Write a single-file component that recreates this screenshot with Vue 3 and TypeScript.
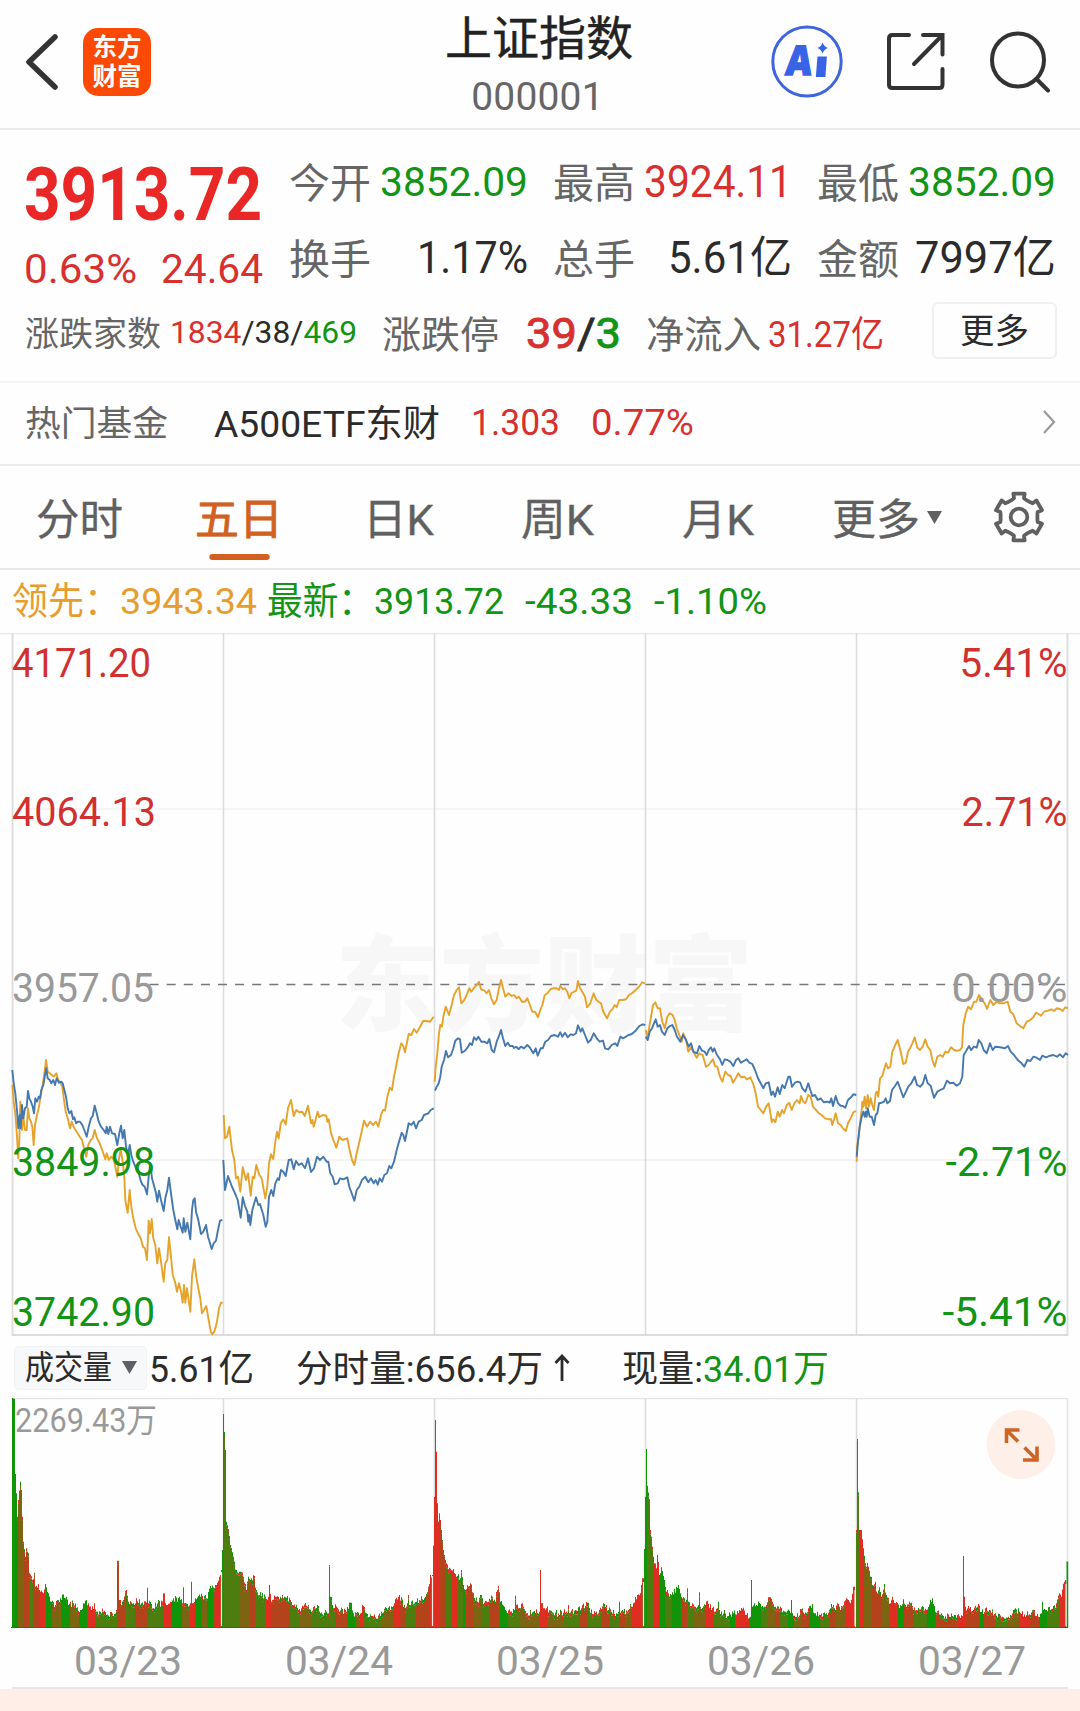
<script setup lang="ts">
import type { Directive } from 'vue'

/* Squeezes or stretches a run of text horizontally to a given advance width. */
const vFit: Directive<HTMLElement, number> = {
  mounted(el, { value }) {
    const natural = el.getBoundingClientRect().width
    el.style.transform = `scaleX(${value / natural})`
    el.style.marginRight = `${value - natural}px`
  },
}

interface Stat { label: string; value: string; tone: string; size: string; width: number }
const stats: Stat[] = [
  { label: '今开', value: '3852.09', tone: 'green', size: 'md', width: 148 },
  { label: '最高', value: '3924.11', tone: 'red', size: 'lg', width: 148 },
  { label: '最低', value: '3852.09', tone: 'green', size: 'md', width: 148 },
  { label: '换手', value: '1.17%', tone: 'ink', size: 'lg', width: 111 },
  { label: '总手', value: '5.61亿', tone: 'ink', size: 'lg', width: 124 },
  { label: '金额', value: '7997亿', tone: 'ink', size: 'lg', width: 141 },
]

interface AxisLabel { text: string; y: number; width: number; tone: string }
const priceLabels: AxisLabel[] = [
  { text: '4171.20', y: 662.5, width: 139, tone: 'up' },
  { text: '4064.13', y: 811.5, width: 144, tone: 'up' },
  { text: '3957.05', y: 987, width: 142, tone: 'flat' },
  { text: '3849.98', y: 1161.7, width: 143, tone: 'down' },
  { text: '3742.90', y: 1311.7, width: 143, tone: 'down' },
]
const percentLabels: AxisLabel[] = [
  { text: '5.41%', y: 662.5, width: 108, tone: 'up' },
  { text: '2.71%', y: 811.5, width: 106, tone: 'up' },
  { text: '0.00%', y: 987, width: 116, tone: 'flat' },
  { text: '-2.71%', y: 1161.7, width: 122, tone: 'down' },
  { text: '-5.41%', y: 1311.7, width: 125, tone: 'down' },
]
const dayLines = [223.5, 434.5, 645.5, 856.5]
const dates = ['03/23', '03/24', '03/25', '03/26', '03/27']

/* Each trading day is sampled in thirds of a pixel from its own origin. */
interface Day { ox: number; oy: number; index: string; lead: string }
const days: Day[] = [
  {
    ox: 0, oy: 1030,
    index: '37,120 41,160 46,190 51,240 55,295 59,255 62,295 66,225 70,265 75,235 80,230 84,183 88,205 93,215 98,230 102,250 106,205 111,215 116,200 120,205 124,180 130,165 135,135 139,115 143,145 149,150 154,160 160,150 165,165 170,145 177,158 184,155 188,160 193,180 198,200 203,235 208,250 214,243 219,268 223,262 228,280 233,275 240,275 247,285 253,300 260,320 266,290 273,265 278,258 284,227 290,250 296,275 303,290 311,300 317,310 320,290 325,312 330,290 336,310 345,312 352,345 358,310 363,287 368,325 373,300 378,350 384,375 389,345 394,375 400,395 408,415 415,425 423,455 428,465 434,470 441,493 447,430 451,400 456,445 463,470 468,490 472,515 477,482 483,510 491,543 496,505 502,480 507,443 513,490 520,540 526,570 532,598 536,570 542,590 548,608 551,565 556,605 562,578 571,628 576,540 580,510 584,505 588,545 595,570 603,612 610,605 618,585 624,620 630,640 635,657 641,640 648,632 654,600 660,572 667,570',
    lead: '37,165 41,215 46,250 51,320 55,385 58,330 61,215 66,300 70,260 75,300 80,300 84,235 88,265 93,275 97,290 101,345 105,285 111,255 116,235 121,205 127,170 132,140 138,90 143,125 149,130 155,135 162,140 169,130 175,150 182,160 187,170 192,210 197,245 203,265 210,295 215,275 222,293 230,305 238,318 246,330 252,355 259,380 265,345 272,330 278,325 284,300 291,325 297,335 303,350 310,370 316,388 320,370 326,390 334,380 342,390 352,440 357,385 362,360 368,395 373,440 376,510 383,548 389,480 394,530 400,565 407,595 414,610 422,625 429,650 435,655 441,690 446,572 450,610 455,567 460,625 466,645 472,700 477,655 483,695 491,755 496,700 502,690 507,622 513,680 518,735 525,755 531,785 537,760 543,785 548,818 552,765 556,818 561,775 571,845 576,740 583,688 588,735 595,775 601,805 606,850 612,840 619,828 626,870 632,905 637,913 643,905 650,880 657,835 663,818 668,818',
  },
  {
    ox: 210, oy: 960,
    index: '40,600 45,690 54,648 65,678 75,700 83,720 92,773 98,712 105,738 112,755 115,785 118,765 121,795 127,750 138,712 145,735 150,732 160,765 167,800 172,785 177,710 184,690 190,708 196,670 203,655 207,660 213,630 220,635 227,648 236,600 244,598 251,628 258,603 266,615 275,610 285,625 294,595 303,636 312,625 321,590 330,600 340,590 350,605 355,605 361,640 368,650 374,673 383,670 390,655 400,658 412,652 418,680 425,700 433,722 440,690 448,680 456,660 466,650 475,667 483,655 491,670 497,660 503,674 509,655 516,665 523,645 531,640 538,618 544,625 552,605 560,570 567,545 575,518 580,525 585,543 596,490 604,495 611,485 618,505 626,485 635,480 642,465 655,460 662,450 671,445',
    lead: '41,465 45,535 51,530 58,500 66,570 73,600 78,655 84,650 91,695 98,622 108,660 114,640 122,707 128,650 133,655 139,615 148,645 155,655 166,715 172,680 177,610 183,583 190,597 196,545 201,515 206,535 212,490 220,478 227,493 234,445 243,420 251,468 259,450 268,457 277,455 284,468 294,437 303,490 307,480 311,500 323,455 328,472 338,465 349,467 352,485 356,478 362,515 370,540 379,563 388,530 397,540 412,535 418,565 426,600 433,615 440,580 447,550 454,520 462,482 471,500 480,485 489,495 498,485 505,500 513,465 519,450 525,452 532,410 539,383 546,390 552,350 560,310 567,275 574,250 580,258 585,277 596,222 604,225 612,207 620,218 628,205 640,182 650,183 660,185 671,170',
  },
  {
    ox: 430, oy: 920,
    index: '15,512 20,500 26,490 31,470 35,440 42,420 48,393 54,412 63,405 70,385 76,362 84,355 90,358 95,398 104,393 113,382 120,370 126,375 132,352 139,360 145,350 154,365 163,365 172,370 178,357 185,390 192,397 200,365 206,350 213,330 219,355 226,378 233,368 240,378 248,378 252,384 258,380 266,387 273,380 282,385 292,375 300,383 310,400 317,385 323,407 332,385 338,385 346,365 354,360 363,348 374,345 384,350 391,337 397,350 405,338 413,352 422,343 430,345 438,340 444,316 452,335 457,325 465,345 474,368 482,360 491,340 500,355 509,365 519,362 525,385 535,388 545,375 556,370 562,378 571,350 580,355 592,347 605,342 617,332 628,318 638,313 646,315',
    lead: '14,485 17,440 22,400 27,340 31,315 36,320 40,290 47,260 57,285 65,255 72,225 80,210 87,202 94,250 103,240 110,225 118,205 124,215 132,203 140,195 147,185 153,208 163,212 170,220 177,210 184,235 192,253 200,240 207,205 213,180 219,205 226,230 235,220 245,228 252,225 260,235 267,230 276,245 285,245 292,235 300,255 307,275 315,275 324,292 331,270 337,255 344,225 352,220 362,207 370,205 380,205 387,210 391,197 398,208 405,205 412,215 418,235 424,220 432,215 439,212 444,183 450,205 457,215 465,230 471,262 481,250 491,220 498,238 505,245 513,250 520,275 531,295 540,275 549,265 554,255 560,262 568,240 578,240 588,238 597,225 606,220 617,210 627,200 637,187 645,190',
  },
  {
    ox: 640, oy: 960,
    index: '17,230 23,240 29,215 36,205 42,190 47,178 53,200 60,195 66,215 74,225 82,205 90,198 97,195 104,210 111,230 121,245 129,225 138,240 146,260 153,250 160,275 171,280 178,258 186,272 194,275 200,285 207,268 213,262 218,275 223,265 231,285 240,298 247,315 254,298 262,300 271,305 280,318 288,300 295,295 303,308 311,303 320,298 328,308 337,312 345,330 354,355 362,370 370,385 377,370 386,367 394,405 399,395 405,410 413,382 419,402 427,375 434,385 445,350 450,350 456,380 465,368 473,365 481,368 487,385 496,395 505,370 511,390 517,408 525,405 533,420 542,415 551,427 562,425 569,428 574,415 579,438 587,408 594,430 602,437 609,438 616,443 624,420 633,412 640,403 649,405',
    lead: '17,210 23,235 28,200 34,165 39,135 46,127 53,145 60,145 67,185 74,205 82,170 89,160 98,165 104,180 110,205 118,225 125,245 130,220 138,240 145,275 153,262 160,275 170,293 178,280 188,285 198,320 206,315 213,305 219,298 225,318 232,320 240,350 247,365 256,335 264,345 272,348 279,368 287,355 295,340 303,352 313,350 320,358 331,352 339,370 347,400 354,440 362,450 370,460 378,440 386,430 392,465 395,487 400,478 406,487 413,455 419,470 426,450 432,460 440,435 448,428 455,450 463,430 471,420 479,430 483,408 490,425 496,430 505,405 512,410 519,440 528,450 537,460 545,465 555,475 565,478 573,478 577,495 587,460 594,490 602,495 609,505 617,513 624,490 632,475 640,457 648,453',
  },
  {
    ox: 840, oy: 960,
    index: '50,590 54,545 59,500 65,470 70,455 74,470 77,455 80,470 83,445 89,470 95,470 102,495 107,465 112,460 117,430 125,428 132,425 137,415 142,430 150,423 156,390 165,378 173,365 182,390 190,412 198,395 205,380 214,370 224,350 231,375 241,380 249,370 256,345 263,370 272,377 282,413 292,395 301,390 311,385 321,362 330,370 340,368 350,377 360,370 367,350 371,285 379,272 387,258 393,270 402,260 410,263 416,240 424,250 431,270 440,280 450,250 458,270 466,260 480,262 495,265 504,258 512,275 522,285 533,300 543,308 553,320 562,300 571,303 580,290 590,293 600,300 607,287 618,292 630,287 640,285 651,290 660,283 669,292 677,280 684,285',
    lead: '50,605 51,560 56,530 60,490 65,450 67,425 70,440 74,410 78,445 83,405 87,440 92,415 97,435 102,450 107,400 111,395 115,410 120,355 127,348 132,330 138,310 144,325 151,320 157,275 166,255 173,240 181,270 190,312 197,308 204,275 210,265 217,250 224,232 232,262 240,270 248,260 256,238 263,260 271,270 277,300 284,320 292,290 300,285 308,290 316,275 324,278 333,262 342,270 352,272 360,270 366,262 370,195 377,160 385,140 393,148 402,125 409,125 417,105 426,120 434,130 441,147 451,120 460,135 470,125 478,130 490,130 503,125 511,155 520,163 530,190 540,198 550,205 560,185 571,180 580,172 588,158 596,162 603,167 612,155 624,152 634,148 642,153 650,145 660,147 668,153 676,142 684,145',
  },
]

const parse = (s: string): number[][] => s.split(' ').map((p) => p.split(',').map(Number))
const polyline = (s: string, ox: number, oy: number): string =>
  parse(s).map(([x, y]) => `${(ox + x / 3).toFixed(1)},${(oy + y / 3).toFixed(1)}`).join(' ')

/* Volume: envelope of the minute bars, and the colour runs (g/l/o/b/r, green to red). */
interface VolumeDay { ox: number; top: string; runs: string }
const volumeDays: VolumeDay[] = [
  {
    ox: 0,
    top: '36,204 42,206 43,250 45,432 48,490 52,560 56,510 60,455 64,480 67,560 70,635 76,680 78,655 84,670 88,730 98,750 102,728 106,770 115,762 122,785 130,790 136,762 144,790 155,815 165,825 180,805 198,800 205,825 220,820 240,840 255,812 264,820 275,840 283,820 290,845 310,845 340,858 350,840 353,692 355,692 357,810 365,825 380,780 386,815 400,820 410,805 425,820 441,810 443,773 446,820 460,835 475,810 480,830 493,790 497,820 520,805 540,810 548,820 551,772 554,820 572,820 575,755 578,820 602,800 620,805 632,768 645,765 658,740 663,720',
    runs: '52g 70o 86b 100l 118b 137r 156g 182o 210g 235o 260g 284r 350l 374b 405l 442b 490l 512r 545g 568o 584r 605g 620o 638g 646b 663r',
  },
  {
    ox: 0,
    top: '667,660 671,252 675,360 679,575 685,597 692,645 700,680 708,720 716,730 722,725 730,740 738,780 746,740 755,745 762,738 768,780 778,795 795,800 806,800 809,765 813,815 828,800 840,800 850,805 870,810 885,830 905,835 926,825 935,845 953,825 960,850 980,845 986,850 988,705 991,800 998,825 1015,838 1040,845 1052,818 1060,850 1078,855 1089,827 1100,850 1125,862 1140,858 1155,832 1172,840 1185,808 1203,802 1210,830 1221,820 1224,795 1228,825 1250,815 1275,800 1285,770 1292,735 1297,735',
    runs: '672g 720l 748o 768b 796l 812r 835b 870b 900l 935o 1005l 1040b 1065g 1078o 1092r 1145l 1178o 1200r 1216b 1248l 1285b 1297r',
  },
  {
    ox: 420,
    top: '39,647 43,500 46,270 49,365 52,520 56,575 59,550 64,600 70,660 78,700 85,718 100,718 110,740 120,745 125,720 130,765 137,780 151,760 160,790 172,815 184,795 192,818 205,815 217,800 225,815 235,767 242,815 255,840 270,845 282,840 285,797 288,825 310,830 320,850 340,845 359,845 361,720 364,820 380,835 400,850 430,848 442,848 445,825 448,850 475,832 485,835 503,818 512,848 535,850 553,822 565,840 590,850 596,845 598,815 601,848 625,840 640,820 652,795 660,790 666,745 669,745',
    runs: '56r 76b 92l 111r 128l 135g 158b 184o 208l 240b 262g 300l 355o 380r 430o 475l 502b 545l 570b 595l 615b 635o 662r 669b',
  },
  {
    ox: 420,
    top: '673,657 676,500 679,357 683,467 687,508 692,600 697,650 702,700 708,715 712,675 718,735 724,712 732,750 740,785 755,795 774,765 785,800 795,815 801,815 803,775 806,815 825,830 836,825 838,787 841,830 862,812 875,840 893,835 895,815 898,840 925,858 940,850 955,850 968,838 980,855 992,860 995,750 998,830 1010,825 1020,822 1035,830 1050,802 1056,815 1065,830 1080,830 1095,845 1111,848 1113,810 1116,850 1135,860 1145,838 1160,850 1176,822 1182,850 1200,855 1220,850 1235,822 1245,840 1256,822 1262,840 1280,805 1290,820 1300,770 1303,770',
    runs: '680g 697l 717r 735g 755l 782g 800b 820l 858o 882r 930l 945g 985r 1022g 1042l 1064o 1080b 1102l 1120g 1145o 1165b 1200g 1230l 1246b 1275o 1303r',
  },
  {
    ox: 740,
    top: '348,710 350,600 352,327 356,487 359,600 364,600 370,655 376,700 384,710 392,740 398,765 405,755 412,790 418,772 425,800 432,762 440,795 450,820 457,800 465,820 480,825 490,808 500,830 512,820 520,840 545,832 560,840 578,805 585,845 610,858 640,860 666,858 669,678 672,800 676,830 700,840 716,822 724,845 748,840 765,850 790,862 810,855 827,835 840,850 870,855 883,840 890,858 903,850 906,815 909,840 930,840 950,820 958,790 965,800 972,755 976,750',
    runs: '355l 370r 395o 422b 450o 472r 492g 522b 560l 588g 650b 678r 718b 732g 765b 800l 835o 870r 895b 920g 960l 976r',
  },
]

const colors: Record<string, string> = { g: '#119407', l: '#4d7d0e', o: '#7d6413', b: '#b2431b', r: '#de2e22' }
const paths: Record<string, string> = { g: '', l: '', o: '', b: '', r: '' }
const BASE = 1628
let seed = 7
const noise = (): number => {
  seed = (seed * 16807) % 2147483647
  return seed / 2147483647
}
for (const day of volumeDays) {
  const pts = parse(day.top)
  const runs = day.runs.split(' ').map((r) => ({ end: parseInt(r, 10), key: r.slice(-1) }))
  const last = pts[pts.length - 1][0]
  for (let px = Math.floor(pts[0][0] / 3); px * 3 <= last; px++) {
    const x = Math.max(px * 3 + 1, pts[0][0])
    const near = pts.filter((p) => Math.floor(p[0] / 3) === px)
    let y: number
    if (near.length) {
      y = Math.min(...near.map((p) => p[1]))
    } else {
      const i = Math.max(1, pts.findIndex((p) => p[0] >= x))
      const [x0, y0] = pts[i - 1]
      const [x1, y1] = pts[i]
      y = y0 + ((y1 - y0) * (x - x0)) / (x1 - x0)
      if (y > 700) y = Math.min(866, y + (noise() - 0.5) * 20)
    }
    const run = runs.find((r) => x <= r.end) ?? runs[runs.length - 1]
    const left = day.ox + px
    const top = 1330 + y / 3
    const tip = noise() > 0.5 ? 'g' : 'r'
    const mixed = run.key !== 'g' && run.key !== 'r'
    const body = Math.min(BASE, top + (mixed ? 1.5 + noise() * 3 : 0))
    if (body > top) paths[tip] += `M${left} ${top.toFixed(1)}h1V${body.toFixed(1)}h-1z`
    paths[run.key] += `M${left} ${body.toFixed(1)}h1V${BASE}h-1z`
  }
}
paths.g += `M1066.5 1561.5h1.7V${BASE}h-1.7z`
const bars = Object.keys(paths).map((k) => ({ key: k, d: paths[k], fill: colors[k] }))

/* Six-toothed gear outline around (26, 26). */
const gear = Array.from({ length: 6 }, (_, i) => {
  const a = -90 + i * 60
  return [[-22, 18.6], [-15, 19.4], [-13.5, 24], [13.5, 24], [15, 19.4], [22, 18.6]]
    .map(([d, r]) => {
      const t = ((a + d) * Math.PI) / 180
      return `${(26 + r * Math.cos(t)).toFixed(1)},${(26 + r * Math.sin(t)).toFixed(1)}`
    })
    .join(' ')
}).join(' ')
</script>

<template>
  <main class="page">
    <header class="top">
      <svg class="back" width="34" height="56" viewBox="0 0 34 56"><path d="M30 3 4 28 30 53" /></svg>
      <div class="logo"><span>东方</span><span>财富</span></div>
      <div class="heading">
        <h1>上证指数</h1>
        <p>000001</p>
      </div>
      <svg class="ai" width="72" height="74" viewBox="0 0 72 74">
        <ellipse cx="36" cy="36.5" rx="34.2" ry="34.6" />
        <text x="19" y="50" textLength="26" lengthAdjust="spacingAndGlyphs" transform="skewX(-6)">A</text>
        <path d="M46.5 31.500h9.400l-1.500 20.500h-9.600z" />
        <path d="M51.6 17.500q1.300 4 5 5.400-3.700 1.500-5 5.600-1.300-4.100-5-5.600 3.700-1.300 5-5.400z" />
      </svg>
      <svg class="share" width="60" height="60" viewBox="0 0 60 60">
        <path d="M23 3H6.500Q3 3 3 6.500V52.500Q3 56 6.500 56H53Q56.500 56 56.500 52.500V37M37 3H56.500V22.500M56 3.500 28 32" />
      </svg>
      <svg class="search" width="62" height="62" viewBox="0 0 62 62">
        <ellipse cx="29" cy="29" rx="26" ry="26.500" /><path d="m47.500 48 11.500 11.500" />
      </svg>
    </header>

    <section class="quote">
      <div class="upper">
        <div class="last">
          <div class="price"><b v-fit="238">3913.72</b></div>
          <div class="change"><span v-fit="113">0.63%</span><span v-fit="102">24.64</span></div>
        </div>
        <dl class="stats">
          <div v-for="s in stats" :key="s.label" class="stat">
            <dt v-fit="82">{{ s.label }}</dt>
            <dd v-fit="s.width" :class="[s.tone, s.size]">{{ s.value }}</dd>
          </div>
        </dl>
      </div>
      <div class="breadth">
        <span v-fit="136" class="label sm">涨跌家数</span>
        <span v-fit="187" class="count"><i class="red">1834</i>/38/<i class="green">469</i></span>
        <span v-fit="117" class="label limit">涨跌停</span>
        <span v-fit="95" class="limits"><i class="red">39</i>/<i class="green">3</i></span>
        <span v-fit="115" class="label flow">净流入</span>
        <span v-fit="116" class="inflow red">31.27亿</span>
        <button class="more">更多</button>
      </div>
    </section>

    <section class="fund">
      <span v-fit="143" class="label">热门基金</span>
      <span v-fit="226" class="name">A500ETF东财</span>
      <span v-fit="89" class="red value">1.303</span>
      <span v-fit="103" class="red rate">0.77%</span>
      <svg width="14" height="26" viewBox="0 0 14 26"><path d="m2 2 10 11L2 24" /></svg>
    </section>

    <nav class="tabs">
      <a v-fit="87">分时</a>
      <a v-fit="88" class="active">五日</a>
      <a v-fit="71">日K</a>
      <a v-fit="73">周K</a>
      <a v-fit="72">月K</a>
      <a v-fit="88">更多</a>
      <svg class="caret" width="16" height="13" viewBox="0 0 16 13"><path d="M0 0h15L7.500 13z" /></svg>
      <svg class="gear" width="52" height="52" viewBox="0 0 52 52">
        <polygon :points="gear" /><circle cx="26" cy="26" r="8.300" />
      </svg>
    </nav>

    <section class="legend">
      <span v-fit="108" class="amber">领先：</span>
      <span v-fit="137" class="amber">3943.34</span>
      <span v-fit="107" class="green newest">最新：</span>
      <span v-fit="130" class="green">3913.72</span>
      <span v-fit="108" class="green diff">-43.33</span>
      <span v-fit="113" class="green diff">-1.10%</span>
    </section>

    <svg class="chart" width="1080" height="703" viewBox="0 633 1080 703">
      <text class="watermark" x="335" y="1023" textLength="418" lengthAdjust="spacingAndGlyphs">东方财富</text>
      <path class="grid faint" d="M12 809H1067M12 1160H1067" />
      <path class="grid top-line" d="M0 633.500H1080" />
      <path class="grid frame" d="M12.500 633V1335H1067.500V633" />
      <path v-for="x in dayLines" :key="x" class="grid day" :d="`M${x} 633V1335`" />
      <path class="zero" d="M149.600 984.500H1067" />
      <template v-for="d in days" :key="d.ox">
        <polyline class="lead" :points="polyline(d.lead, d.ox, d.oy)" />
        <polyline class="index" :points="polyline(d.index, d.ox, d.oy)" />
      </template>
      <text
        v-for="l in priceLabels" :key="l.text" :class="['axis', l.tone]" x="12" :y="l.y + 14.500"
        :textLength="l.width" lengthAdjust="spacingAndGlyphs"
      >{{ l.text }}</text>
      <text
        v-for="l in percentLabels" :key="l.text" :class="['axis', l.tone]" :x="1067.500 - l.width" :y="l.y + 14.500"
        :textLength="l.width" lengthAdjust="spacingAndGlyphs"
      >{{ l.text }}</text>
    </svg>

    <section class="volume-head">
      <button class="picker"><span v-fit="87">成交量</span><svg width="15" height="13" viewBox="0 0 15 13"><path d="M0 0h15L7.500 13z" /></svg></button>
      <span v-fit="105">5.61亿</span>
      <span v-fit="247" class="minute">分时量:656.4万</span>
      <svg class="rise" width="16" height="28" viewBox="0 0 16 28"><path d="M8 27V2M1.500 9 8 2l6.500 7" /></svg>
      <span v-fit="81" class="now">现量:</span>
      <span v-fit="126" class="green">34.01万</span>
    </section>

    <svg class="chart" width="1080" height="230" viewBox="0 1398 1080 230">
      <path class="grid vol" d="M12 1398.500H1067.500V1628" />
      <path v-for="x in dayLines" :key="x" class="grid day" :d="`M${x} 1398V1628`" />
      <path v-for="b in bars" :key="b.key" :d="b.d" :fill="b.fill" />
      <path class="gap" d="M221.500 1572V1626M432.500 1576V1626M643.500 1582V1626M855 1590V1626M1066 1584V1626" />
      <path class="base" d="M11 1627.500H1068" />
      <text class="peak" x="15" y="1432" textLength="142" lengthAdjust="spacingAndGlyphs">2269.43万</text>
      <circle cx="1021" cy="1444.500" r="34.500" fill="#fef0e8" />
      <path class="expand" d="M1019.500 1430H1006.500V1443M1006.500 1430 1018 1441.500M1037 1446.500V1460H1023M1037 1460 1024.500 1447.500" />
    </svg>

    <footer class="dates">
      <span v-for="d in dates" :key="d"><em v-fit="108">{{ d }}</em></span>
    </footer>
    <div class="strip"></div>
  </main>
</template>

<style>
body { margin: 0; background: #fefefe; }
</style>

<style scoped>
.page {
  width: 1080px;
  height: 1711px;
  overflow: hidden;
  display: flex;
  flex-direction: column;
  background: #fefefe;
  color: #2b2b2b;
  font-family: Roboto, "Noto Sans CJK SC", sans-serif;
}
.page > * { flex: none; box-sizing: border-box; }
span, b, dt, dd, a, em { display: inline-block; flex: none; white-space: nowrap; transform-origin: 0 50%; }
i, em { font-style: normal; }
svg { display: block; flex: none; fill: none; }
.red { color: #d7302f; }
.green { color: #129415; }
.amber { color: #e79c2e; }
.ink { color: #2b2b2b; }
.label { color: #666; }

.top { height: 130px; display: flex; align-items: center; border-bottom: 2px solid #ebebed; padding-bottom: 4px; }
.back { margin-left: 25px; stroke: #333; stroke-width: 5.5; stroke-linecap: round; stroke-linejoin: round; }
.logo {
  width: 68px; height: 68px; margin-left: 24px; border-radius: 15px; background: #fc4a06; color: #fff;
  display: flex; flex-direction: column; align-items: center; justify-content: center;
  font-size: 24.500px; font-weight: 700; line-height: 29px;
}
.heading { width: 260px; margin-left: 258px; text-align: center; }
h1 { margin: 0; font-size: 47px; line-height: 62px; font-weight: 400; color: #222; padding-top: 6px; -webkit-text-stroke: 0.4px; }
p { margin: 0 3px 0 0; font-size: 39px; line-height: 50px; letter-spacing: 0.2px; color: #666; padding-top: 2px; }
.ai { margin-left: 102px; fill: #3963e6; }
.ai ellipse { fill: none; stroke: #3d66dd; stroke-width: 3; }
.ai text { font-family: "Noto Sans", sans-serif; font-weight: 900; font-size: 41px; stroke: #3963e6; stroke-width: 1.4; }
.share { margin-left: 43px; stroke: #333; stroke-width: 4; stroke-linecap: round; }
.search { margin-left: 43px; stroke: #333; stroke-width: 4; stroke-linecap: round; }

.quote { height: 253px; border-bottom: 2px solid #f5f5f6; padding-top: 14px; }
.upper { display: flex; height: 151px; }
.last { width: 265px; margin-left: 24px; flex: none; }
.price { height: 101px; color: #e92726; font-size: 75px; line-height: 101px; }
.price b { font-weight: 700; }
.change { display: flex; gap: 24px; height: 50px; line-height: 50px; font-size: 40px; color: #d7302f; }
.stats { margin: 0; display: grid; grid-template-columns: repeat(3, 239px); grid-auto-rows: 75.500px; column-gap: 25px; }
.stat { display: flex; justify-content: space-between; line-height: 77.500px; }
.stat dt { font-size: 41px; color: #666; padding-top: 2px; }
.stat dd { margin: 0; }
.md { font-size: 41px; }
.lg { font-size: 44px; }
.breadth { display: flex; align-items: center; height: 75px; padding-left: 25px; }
.sm { font-size: 34px; padding-bottom: 2px; }
.count { font-size: 31px; margin-left: 9px; }
.limit { font-size: 38px; margin-left: 25px; padding-bottom: 3px; }
.limits { font-size: 43px; -webkit-text-stroke: 0.9px; margin-left: 27px; }
.flow { font-size: 38px; margin-left: 25px; padding-bottom: 3px; }
.inflow { font-size: 36px; margin-left: 7px; padding-bottom: 4px; }
.more {
  width: 125px; height: 57px; margin-left: auto; margin-right: 23px; padding: 0; margin-top: -4px;
  border: 2px solid #f0f0f1; border-radius: 6px; background: #fefefe; color: #2b2b2b;
  font: 400 34.500px/50px Roboto, "Noto Sans CJK SC", sans-serif;
}

.fund { height: 83px; display: flex; align-items: center; border-bottom: 2px solid #ececee; padding-left: 25px; padding-bottom: 3px; font-size: 37px; }
.fund .label { font-size: 35px; padding-bottom: 4px; }
.fund .name { margin-left: 46px; padding-bottom: 3px; }
.fund .value { margin-left: 31px; }
.fund .rate { margin-left: 31px; }
.fund svg { margin-left: auto; margin-right: 24px; stroke: #999; stroke-width: 2.2; }

.tabs { height: 104px; display: flex; align-items: center; border-bottom: 2px solid #e8e8ea; font-size: 43px; color: #606060; }
.tabs a { position: relative; line-height: 100px; padding-top: 5px; -webkit-text-stroke: 0.3px; }
.tabs a:nth-child(1) { margin-left: 36px; }
.tabs a:nth-child(2) { margin-left: 72px; }
.tabs a:nth-child(3) { margin-left: 80px; }
.tabs a:nth-child(4) { margin-left: 87px; }
.tabs a:nth-child(5) { margin-left: 88px; }
.tabs a:nth-child(6) { margin-left: 78px; }
.tabs .active { color: #d2601f; -webkit-text-stroke: 0.8px; }
.tabs .active::after {
  content: ""; position: absolute; left: 14px; right: 13px; bottom: 10px; height: 6px; border-radius: 3px; background: #d2601f;
}
.caret { margin-left: 7px; fill: #606060; }
.gear { margin-left: auto; margin-right: 35px; stroke: #606060; stroke-width: 3.8; stroke-linejoin: round; }

.legend { height: 64px; display: flex; align-items: center; padding-left: 12px; padding-bottom: 2px; font-size: 37.500px; line-height: 60px; }
.legend .newest { margin-left: 10px; }
.legend .diff { margin-left: 21px; }

.grid { stroke: #dcdcde; stroke-width: 1.6; }
.grid.faint { stroke: #f4f4f5; stroke-width: 2; }
.grid.frame { stroke: #dcdcde; stroke-width: 1.8; }
.grid.top-line { stroke: #e8e8ea; }
.grid.vol { stroke: #e4e4e6; }
.chart { margin-top: -1px; }
.zero { stroke: #777; stroke-width: 1.6; stroke-dasharray: 9 8.1; }
.lead, .index { stroke-width: 1.9; stroke-linejoin: round; }
.lead { stroke: #e5a32c; }
.index { stroke: #4478ae; }
.axis { font-size: 40.500px; }
.up { fill: #d1302f; }
.down { fill: #129415; }
.flat { fill: #999; }
.watermark { font-size: 104px; font-weight: 900; fill: #f7f7f7; }
.base { stroke: #7a4a1a; stroke-width: 1.2; }
.gap { stroke: #f6ece4; stroke-width: 1.2; }
.peak { font-size: 33px; fill: #999; }
.expand { stroke: #cb6424; stroke-width: 3.6; }

.volume-head { height: 63px; display: flex; align-items: center; padding-left: 14px; font-size: 37px; }
.volume-head > span { padding-bottom: 4px; }
.picker {
  width: 133px; height: 44px; margin-right: 2px; padding: 0 0 0 10px; display: flex; align-items: center; gap: 10px;
  border: 1px solid #f0f2f4; border-radius: 5px; background: #f7f8fa; color: #2b2b2b;
  font: 400 33.500px/40px Roboto, "Noto Sans CJK SC", sans-serif; flex: none; box-sizing: border-box;
}
.picker svg { fill: #5c6064; }
.minute { margin-left: 42px; }
.rise { margin-left: 11px; stroke: #2b2b2b; stroke-width: 2.8; }
.now { margin-left: 52px; }

.dates { height: 61px; margin: 0 12px; padding: 4px 0 0; display: flex; border-bottom: 2px solid #e9e6e5; color: #999; font-size: 41px; line-height: 58px; }
.dates > span { width: 211.200px; padding-left: 61.500px; box-sizing: border-box; }
.strip { height: 24px; background: #feeee7; }
</style>
